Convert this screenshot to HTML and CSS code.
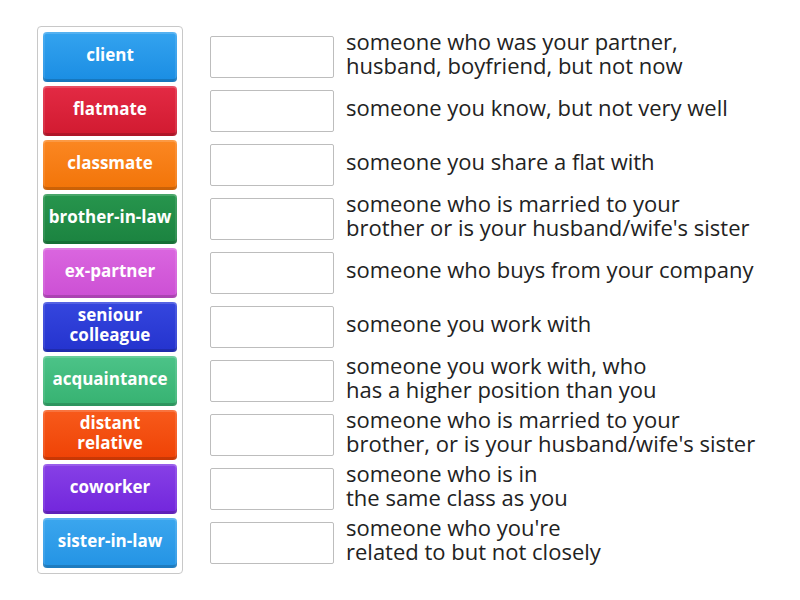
FILE: index.html
```html
<!DOCTYPE html>
<html>
<head>
<meta charset="utf-8">
<link rel="stylesheet" href="styles.css">
</head>
<body>
<div class="page">
  <div class="bank">
    <div class="tile blue">client</div>
    <div class="tile red">flatmate</div>
    <div class="tile orange">classmate</div>
    <div class="tile green">brother-in-law</div>
    <div class="tile pink">ex-partner</div>
    <div class="tile indigo">seniour colleague</div>
    <div class="tile mint">acquaintance</div>
    <div class="tile vermilion">distant relative</div>
    <div class="tile purple">coworker</div>
    <div class="tile sky">sister-in-law</div>
  </div>
  <div class="rows">
    <div class="row"><div class="slot"></div><div class="def">someone who was your partner,<br>husband, boyfriend, but not now</div></div>
    <div class="row"><div class="slot"></div><div class="def">someone you know, but not very well</div></div>
    <div class="row"><div class="slot"></div><div class="def">someone you share a flat with</div></div>
    <div class="row"><div class="slot"></div><div class="def">someone who is married to your<br>brother or is your husband/wife's sister</div></div>
    <div class="row"><div class="slot"></div><div class="def">someone who buys from your company</div></div>
    <div class="row"><div class="slot"></div><div class="def">someone you work with</div></div>
    <div class="row"><div class="slot"></div><div class="def">someone you work with, who<br>has a higher position than you</div></div>
    <div class="row"><div class="slot"></div><div class="def">someone who is married to your<br>brother, or is your husband/wife's sister</div></div>
    <div class="row"><div class="slot"></div><div class="def">someone who is in<br>the same class as you</div></div>
    <div class="row"><div class="slot"></div><div class="def">someone who you're<br>related to but not closely</div></div>
  </div>
</div>
</body>
</html>
```

FILE: styles.css
```css
html, body {
  margin: 0;
  padding: 0;
  background: #ffffff;
}

body {
  font-family: "Open Sans", "Liberation Sans", sans-serif;
  color: #222222;
}

.page {
  display: flex;
  align-items: flex-start;
  padding: 26px 0 0 37px;
}

.bank {
  display: flex;
  flex-direction: column;
  gap: 4px;
  padding: 5px;
  border: 1px solid #c8c8c8;
  border-radius: 4px;
}

.tile {
  box-sizing: border-box;
  width: 134px;
  height: 50px;
  display: flex;
  align-items: center;
  justify-content: center;
  text-align: center;
  color: #ffffff;
  font-weight: 700;
  font-size: 17px;
  line-height: 20px;
  padding: 0 3px 5px;
  border-radius: 4px;
  box-shadow: inset 0 -3px 0 rgba(0, 0, 0, 0.16), inset 0 2px 0 rgba(255, 255, 255, 0.16), inset 2px 0 0 rgba(255, 255, 255, 0.1), inset -2px 0 0 rgba(255, 255, 255, 0.1);
}

.blue { background: linear-gradient(#34a3ef, #1a8de3); }
.red { background: linear-gradient(#e32a44, #d11a30); }
.orange { background: linear-gradient(#fb8722, #f27408); }
.green { background: linear-gradient(#27954d, #1b8340); }
.pink { background: linear-gradient(#da66df, #cc4fd4); }
.indigo { background: linear-gradient(#3546de, #2433ce); }
.mint { background: linear-gradient(#4cc388, #36b271); }
.vermilion { background: linear-gradient(#f75a1b, #ef4205); }
.purple { background: linear-gradient(#8740e6, #7226dc); }
.sky { background: linear-gradient(#3ba6ee, #2393e4); }

.rows {
  display: flex;
  flex-direction: column;
  gap: 4px;
  padding-top: 6px;
  margin-left: 27px;
}

.row {
  height: 50px;
  display: flex;
  align-items: center;
  gap: 12px;
}

.slot {
  box-sizing: border-box;
  width: 124px;
  height: 42px;
  border: 1px solid #bdbdbd;
  border-radius: 2px;
  background: #ffffff;
  flex: none;
}

.def {
  font-size: 22px;
  line-height: 24px;
  white-space: nowrap;
  margin-top: -8px;
}
```
